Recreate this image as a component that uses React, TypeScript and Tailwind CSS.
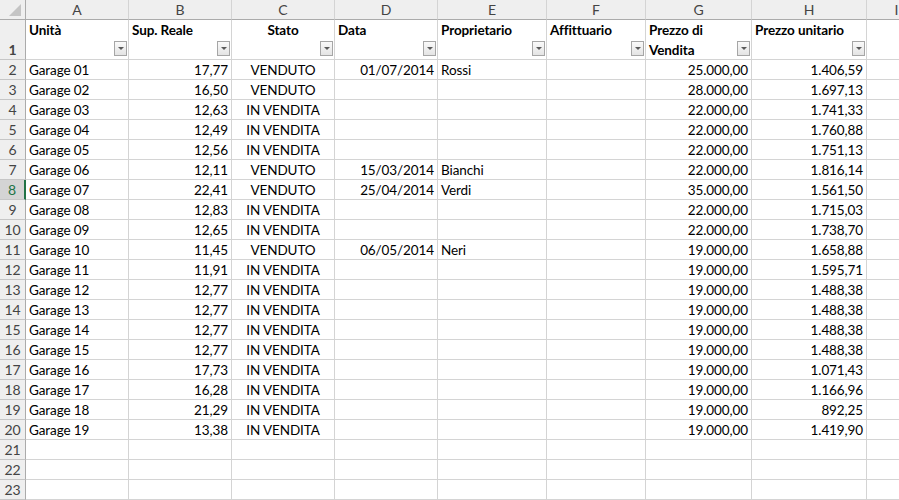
import React from "react"

type Row = {
  unita: string
  sup: string
  stato: string
  data: string
  prop: string
  prezzo: string
  unit: string
}

const rows: Row[] = [
  { unita: "Garage 01", sup: "17,77", stato: "VENDUTO", data: "01/07/2014", prop: "Rossi", prezzo: "25.000,00", unit: "1.406,59" },
  { unita: "Garage 02", sup: "16,50", stato: "VENDUTO", data: "", prop: "", prezzo: "28.000,00", unit: "1.697,13" },
  { unita: "Garage 03", sup: "12,63", stato: "IN VENDITA", data: "", prop: "", prezzo: "22.000,00", unit: "1.741,33" },
  { unita: "Garage 04", sup: "12,49", stato: "IN VENDITA", data: "", prop: "", prezzo: "22.000,00", unit: "1.760,88" },
  { unita: "Garage 05", sup: "12,56", stato: "IN VENDITA", data: "", prop: "", prezzo: "22.000,00", unit: "1.751,13" },
  { unita: "Garage 06", sup: "12,11", stato: "VENDUTO", data: "15/03/2014", prop: "Bianchi", prezzo: "22.000,00", unit: "1.816,14" },
  { unita: "Garage 07", sup: "22,41", stato: "VENDUTO", data: "25/04/2014", prop: "Verdi", prezzo: "35.000,00", unit: "1.561,50" },
  { unita: "Garage 08", sup: "12,83", stato: "IN VENDITA", data: "", prop: "", prezzo: "22.000,00", unit: "1.715,03" },
  { unita: "Garage 09", sup: "12,65", stato: "IN VENDITA", data: "", prop: "", prezzo: "22.000,00", unit: "1.738,70" },
  { unita: "Garage 10", sup: "11,45", stato: "VENDUTO", data: "06/05/2014", prop: "Neri", prezzo: "19.000,00", unit: "1.658,88" },
  { unita: "Garage 11", sup: "11,91", stato: "IN VENDITA", data: "", prop: "", prezzo: "19.000,00", unit: "1.595,71" },
  { unita: "Garage 12", sup: "12,77", stato: "IN VENDITA", data: "", prop: "", prezzo: "19.000,00", unit: "1.488,38" },
  { unita: "Garage 13", sup: "12,77", stato: "IN VENDITA", data: "", prop: "", prezzo: "19.000,00", unit: "1.488,38" },
  { unita: "Garage 14", sup: "12,77", stato: "IN VENDITA", data: "", prop: "", prezzo: "19.000,00", unit: "1.488,38" },
  { unita: "Garage 15", sup: "12,77", stato: "IN VENDITA", data: "", prop: "", prezzo: "19.000,00", unit: "1.488,38" },
  { unita: "Garage 16", sup: "17,73", stato: "IN VENDITA", data: "", prop: "", prezzo: "19.000,00", unit: "1.071,43" },
  { unita: "Garage 17", sup: "16,28", stato: "IN VENDITA", data: "", prop: "", prezzo: "19.000,00", unit: "1.166,96" },
  { unita: "Garage 18", sup: "21,29", stato: "IN VENDITA", data: "", prop: "", prezzo: "19.000,00", unit: "892,25" },
  { unita: "Garage 19", sup: "13,38", stato: "IN VENDITA", data: "", prop: "", prezzo: "19.000,00", unit: "1.419,90" },
]

const grid = "grid grid-cols-[26px_103px_103px_103px_103px_109px_99px_106px_115px_60px]"
const cell = "border-r border-b border-[#d4d4d4] px-[3px] whitespace-nowrap overflow-hidden"
const letters = ["A", "B", "C", "D", "E", "F", "G", "H", "I"]

function FilterButton() {
  return (
    <div className="absolute right-[1px] bottom-[3px] flex h-[15px] w-[13px] items-center justify-center border border-[#a6a6a6] bg-gradient-to-b from-[#fafafa] to-[#e4e4e4]">
      <div className="h-0 w-0 border-x-[3px] border-t-[3px] border-x-transparent border-t-[#5a5a5a]" />
    </div>
  )
}

function RowHead({ n, selected }: { n: number; selected?: boolean }) {
  return (
    <div
      className={`flex items-end justify-center border-b border-[#c6c6c6] text-[14px] ${
        selected
          ? "border-r-2 border-r-[#217346] bg-[#d4d4d4] text-[#217346]"
          : "border-r border-r-[#ababab] bg-[#efefef] text-[#444]"
      }`}
    >
      <span className="leading-[19px]">{n}</span>
    </div>
  )
}

export default function App() {
  return (
    <div
      className="h-[500px] w-[899px] overflow-hidden bg-white text-[13.5px] tracking-[-0.1px] text-black"
      style={{ fontFamily: "Lato, 'Liberation Sans', sans-serif" }}
    >
      {/* column letters */}
      <div className={`${grid} h-[20px] bg-[#efefef] text-[14px] text-[#444]`}>
        <div className="relative border-r border-b border-[#ababab]">
          <div className="absolute right-[4px] bottom-[3px] h-0 w-0 border-l-[12px] border-t-[12px] border-l-transparent border-t-transparent border-b-0 border-r-0 [border-bottom:12px_solid_#c4c4c4]" />
        </div>
        {letters.map((l) => (
          <div key={l} className="flex items-center justify-center border-r border-b border-r-[#d4d4d4] border-b-[#ababab] leading-[19px]">
            {l}
          </div>
        ))}
      </div>

      {/* header row 1 */}
      <div className={`${grid} h-[40px] font-bold leading-[20px]`}>
        <RowHead n={1} />
        <div className={`${cell} relative`}>Unità<FilterButton /></div>
        <div className={`${cell} relative`}>Sup. Reale<FilterButton /></div>
        <div className={`${cell} relative text-center`}>Stato<FilterButton /></div>
        <div className={`${cell} relative`}>Data<FilterButton /></div>
        <div className={`${cell} relative`}>Proprietario<FilterButton /></div>
        <div className={`${cell} relative`}>Affittuario<FilterButton /></div>
        <div className={`${cell} relative whitespace-normal`}>Prezzo di<br />Vendita<FilterButton /></div>
        <div className={`${cell} relative`}>Prezzo unitario<FilterButton /></div>
        <div className={cell} />
      </div>

      {rows.map((r, i) => (
        <div key={r.unita} className={`${grid} h-[20px] leading-[20px]`}>
          <RowHead n={i + 2} selected={i + 2 === 8} />
          <div className={cell}>{r.unita}</div>
          <div className={`${cell} text-right`}>{r.sup}</div>
          <div className={`${cell} text-center`}>{r.stato}</div>
          <div className={`${cell} text-right`}>{r.data}</div>
          <div className={cell}>{r.prop}</div>
          <div className={cell} />
          <div className={`${cell} text-right`}>{r.prezzo}</div>
          <div className={`${cell} text-right`}>{r.unit}</div>
          <div className={cell} />
        </div>
      ))}

      {[21, 22, 23].map((n) => (
        <div key={n} className={`${grid} h-[20px] leading-[20px]`}>
          <RowHead n={n} />
          {letters.map((l) => (
            <div key={l} className={cell} />
          ))}
        </div>
      ))}
    </div>
  )
}
